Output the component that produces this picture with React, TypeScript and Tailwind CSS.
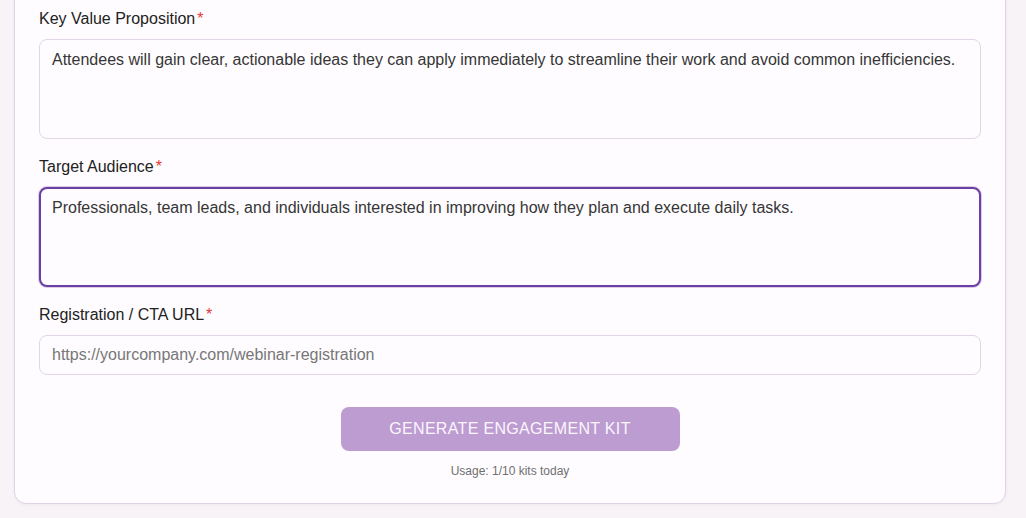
const fieldBase =
  "w-full rounded-lg bg-[#fefcfe] px-3 text-[16px] text-[#363636] outline-none";

function Label({ text }: { text: string }) {
  return (
    <label className="mb-2 block text-[16px] leading-6 text-[#222]">
      {text}
      <span className="ml-0.5 text-[#e53935]">*</span>
    </label>
  );
}

export default function App() {
  return (
    <div
      className="min-h-screen bg-[#f8f3f6] pl-[14px] pr-[20px] pb-[14px]"
      style={{ fontFamily: '"Liberation Sans", Arial, sans-serif' }}
    >
      {/* card top is scrolled out of view */}
      <div className="-mt-[40px] rounded-xl border border-[#ded2e5] bg-[#fefcfe] px-6 pt-[46px] pb-[24px] shadow-[0_1px_3px_rgba(120,80,140,0.06)]">
        <div className="flex flex-col gap-4">
          <div>
            <Label text="Key Value Proposition" />
            <textarea
              className={`${fieldBase} block h-[100px] resize-none border border-[#e2d6e6] py-[8px] leading-6`}
              defaultValue="Attendees will gain clear, actionable ideas they can apply immediately to streamline their work and avoid common inefficiencies."
            />
          </div>
          <div>
            <Label text="Target Audience" />
            <textarea
              className={`${fieldBase} block h-[100px] resize-none border-2 border-[#6c3fa3] py-[7px] px-[11px] leading-6 shadow-[0_0_0_1px_#dccbe8]`}
              defaultValue="Professionals, team leads, and individuals interested in improving how they plan and execute daily tasks."
            />
          </div>
          <div>
            <Label text="Registration / CTA URL" />
            <input
              className={`${fieldBase} block h-10 border border-[#e2d6e6] placeholder:text-[#777]`}
              placeholder="https://yourcompany.com/webinar-registration"
            />
          </div>
        </div>
        <div className="mt-8 flex flex-col items-center">
          <button className="h-11 w-[339px] rounded-lg bg-[#bd9cd1] text-[16px] tracking-[0.02em] text-[#fbf6fd] uppercase">
            Generate Engagement Kit
          </button>
          <p className="mt-[12px] text-[12px] leading-4 text-[#6f6f6f]">
            Usage: 1/10 kits today
          </p>
        </div>
      </div>
    </div>
  );
}
